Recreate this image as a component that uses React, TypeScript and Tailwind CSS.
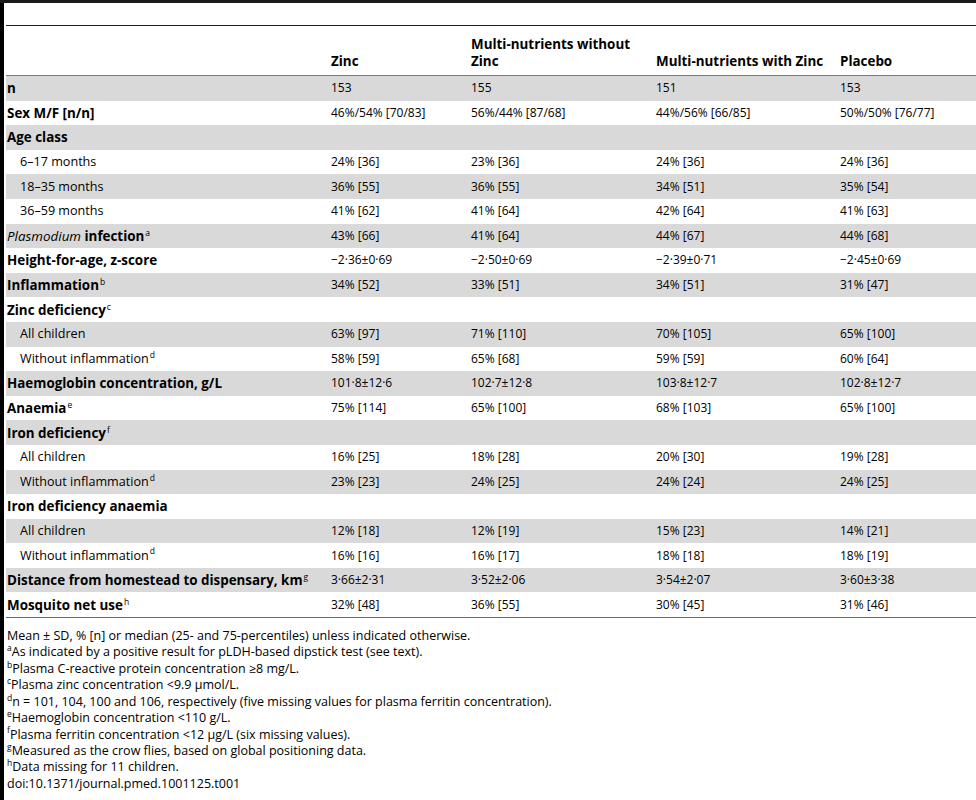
import React from "react";

type Row = {
  label: React.ReactNode;
  vals?: string[];
  bold?: boolean;
  indent?: boolean;
};

const Sup = ({ c }: { c: string }) => (
  <sup className="text-[8.5px] font-normal relative top-[-0.6em] ml-[1px]">{c}</sup>
);

const rows: Row[] = [
  { label: "n", vals: ["153", "155", "151", "153"], bold: true },
  { label: "Sex M/F [n/n]", vals: ["46%/54% [70/83]", "56%/44% [87/68]", "44%/56% [66/85]", "50%/50% [76/77]"], bold: true },
  { label: "Age class", bold: true },
  { label: "6–17 months", vals: ["24% [36]", "23% [36]", "24% [36]", "24% [36]"], indent: true },
  { label: "18–35 months", vals: ["36% [55]", "36% [55]", "34% [51]", "35% [54]"], indent: true },
  { label: "36–59 months", vals: ["41% [62]", "41% [64]", "42% [64]", "41% [63]"], indent: true },
  {
    label: (
      <>
        <span className="italic font-normal">Plasmodium</span> infection<Sup c="a" />
      </>
    ),
    vals: ["43% [66]", "41% [64]", "44% [67]", "44% [68]"],
    bold: true,
  },
  { label: "Height-for-age, z-score", vals: ["−2·36±0·69", "−2·50±0·69", "−2·39±0·71", "−2·45±0·69"], bold: true },
  { label: <>Inflammation<Sup c="b" /></>, vals: ["34% [52]", "33% [51]", "34% [51]", "31% [47]"], bold: true },
  { label: <>Zinc deficiency<Sup c="c" /></>, bold: true },
  { label: "All children", vals: ["63% [97]", "71% [110]", "70% [105]", "65% [100]"], indent: true },
  { label: <>Without inflammation<Sup c="d" /></>, vals: ["58% [59]", "65% [68]", "59% [59]", "60% [64]"], indent: true },
  { label: "Haemoglobin concentration, g/L", vals: ["101·8±12·6", "102·7±12·8", "103·8±12·7", "102·8±12·7"], bold: true },
  { label: <>Anaemia<Sup c="e" /></>, vals: ["75% [114]", "65% [100]", "68% [103]", "65% [100]"], bold: true },
  { label: <>Iron deficiency<Sup c="f" /></>, bold: true },
  { label: "All children", vals: ["16% [25]", "18% [28]", "20% [30]", "19% [28]"], indent: true },
  { label: <>Without inflammation<Sup c="d" /></>, vals: ["23% [23]", "24% [25]", "24% [24]", "24% [25]"], indent: true },
  { label: "Iron deficiency anaemia", bold: true },
  { label: "All children", vals: ["12% [18]", "12% [19]", "15% [23]", "14% [21]"], indent: true },
  { label: <>Without inflammation<Sup c="d" /></>, vals: ["16% [16]", "16% [17]", "18% [18]", "18% [19]"], indent: true },
  { label: <>Distance from homestead to dispensary, km<Sup c="g" /></>, vals: ["3·66±2·31", "3·52±2·06", "3·54±2·07", "3·60±3·38"], bold: true },
  { label: <>Mosquito net use<Sup c="h" /></>, vals: ["32% [48]", "36% [55]", "30% [45]", "31% [46]"], bold: true },
];

const grid = "grid grid-cols-[324px_140px_185px_184px_1fr]";

const notes: { s?: string; t: React.ReactNode }[] = [
  { t: "Mean ± SD, % [n] or median (25- and 75-percentiles) unless indicated otherwise." },
  { s: "a", t: "As indicated by a positive result for pLDH-based dipstick test (see text)." },
  { s: "b", t: "Plasma C-reactive protein concentration ≥8 mg/L." },
  { s: "c", t: "Plasma zinc concentration <9.9 μmol/L." },
  { s: "d", t: "n = 101, 104, 100 and 106, respectively (five missing values for plasma ferritin concentration)." },
  { s: "e", t: "Haemoglobin concentration <110 g/L." },
  { s: "f", t: "Plasma ferritin concentration <12 μg/L (six missing values)." },
  { s: "g", t: "Measured as the crow flies, based on global positioning data." },
  { s: "h", t: "Data missing for 11 children." },
  { t: "doi:10.1371/journal.pmed.1001125.t001" },
];

export default function App() {
  return (
    <div
      className="w-[976px] h-[800px] bg-white text-black flex flex-col overflow-hidden"
      style={{ fontFamily: "'Open Sans', 'Noto Sans', sans-serif" }}
    >
      <div className="h-[3px] w-full bg-[#1a1a1a] shrink-0" />
      <div className="flex flex-1">
        <div className="w-[4px] self-stretch bg-black shrink-0" />
        <div className="flex-1 ml-[2px] text-[12px]">
          <div className="h-[22px]" />
          <div className={`${grid} h-[51px] border-t border-b border-t-[#222] border-b-[#7a7a7a] font-bold text-[13.4px] items-end pb-[5px] leading-[17px]`}>
            <div className="pl-[1px]" />
            <div className="pl-[1px]">Zinc</div>
            <div className="pl-[1px] pr-[10px]">Multi-nutrients without Zinc</div>
            <div className="pl-[1px] whitespace-nowrap">Multi-nutrients with Zinc</div>
            <div className="pl-[1px]">Placebo</div>
          </div>
          <div className="border-b border-[#6a6a6a]">
            {rows.map((r, i) => (
              <div
                key={i}
                className={`${grid} h-[24.6px] items-center leading-[16px] ${i % 2 === 0 ? "bg-[#d9d9d9]" : "bg-white"}`}
              >
                <div className={`${r.indent ? "pl-[14px] text-[12.6px]" : "pl-[1px]"} ${r.bold ? "font-bold text-[13.4px]" : ""} whitespace-nowrap`}>
                  {r.label}
                </div>
                {(r.vals ?? ["", "", "", ""]).map((v, j) => (
                  <div key={j} className="pl-[1px] whitespace-nowrap">
                    {v}
                  </div>
                ))}
              </div>
            ))}
          </div>
          <div className="pt-[10px] pl-[1px] leading-[16.4px] text-[12.5px]">
            {notes.map((n, i) => (
              <div key={i} className="whitespace-nowrap">
                {n.s && <sup className="text-[8.5px] relative top-[-0.6em]">{n.s}</sup>}
                {n.t}
              </div>
            ))}
          </div>
        </div>
      </div>
    </div>
  );
}
